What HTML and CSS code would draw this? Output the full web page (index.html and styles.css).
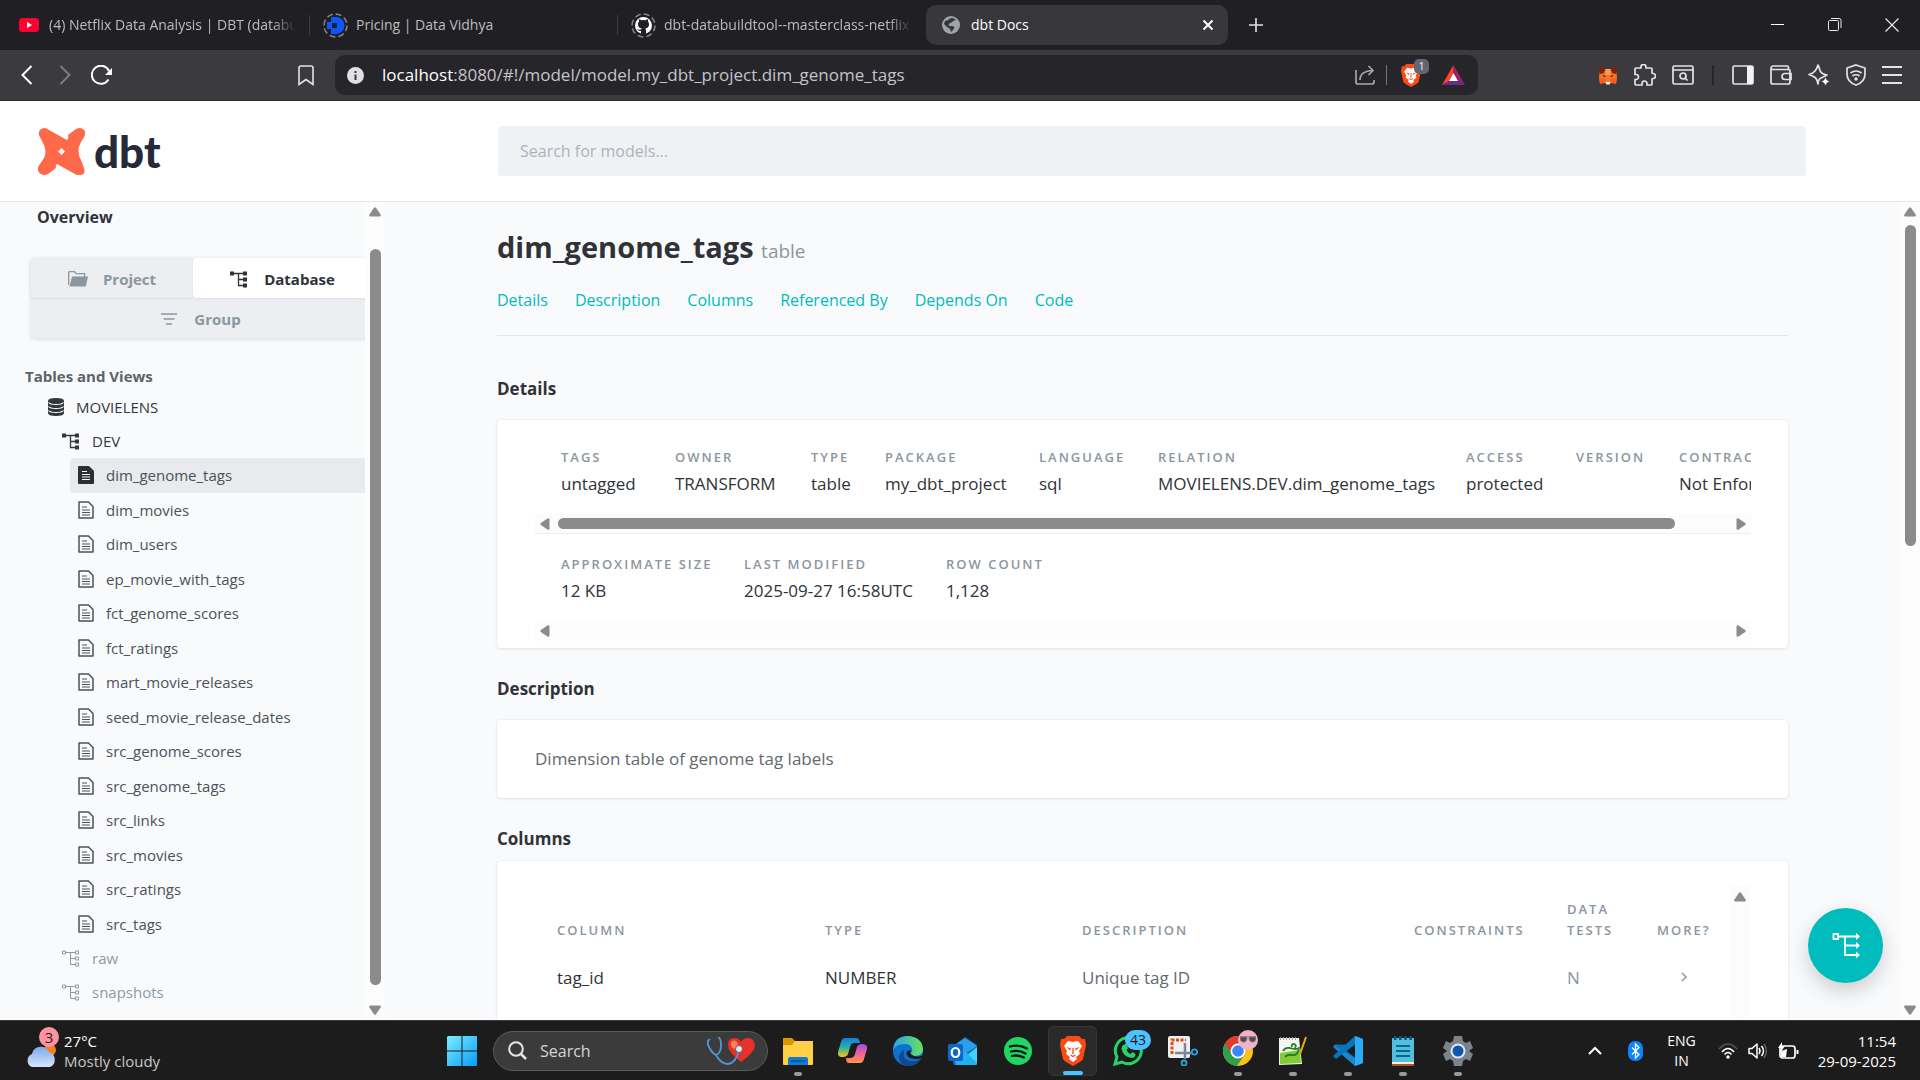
FILE: index.html
```html
<!DOCTYPE html>
<html lang="en">
<head>
<meta charset="utf-8">
<title>dbt Docs</title>
<link rel="stylesheet" href="styles.css">
</head>
<body>
<svg class="defs" aria-hidden="true">
  <symbol id="doc" viewBox="0 0 16 18"><path d="M1 1h9.500l4.500 4.500V17H1z" fill="none" stroke="currentColor" stroke-width="1.500" stroke-linejoin="round"/><path d="M4 6h5M4 9h8M4 11.500h8M4 14h8" stroke="currentColor" stroke-width="1.200"/></symbol>
  <symbol id="doc-on" viewBox="0 0 16 18"><path d="M1 0h10l5 5v12q0 1-1 1H1q-1 0-1-1V1q0-1 1-1z" fill="currentColor"/><path d="M4 5.500h5M4 8.500h8M4 11h8M4 13.500h8" stroke="#fff" stroke-width="1.200"/></symbol>
  <symbol id="tree-on" viewBox="0 0 17 17"><path d="M2 2.500h13M8.500 2.500v12H15M8.500 8.500H15" fill="none" stroke="currentColor" stroke-width="1.300"/><path d="M0 .5h4v4H0zM13 .5h4v4h-4zM13 6.500h4v4h-4zM13 12.500h4v4h-4z" fill="currentColor"/></symbol>
  <symbol id="tree" viewBox="0 0 17 17"><path d="M3.500 2.500h10M8.500 2.500v12h5M8.500 8.500h5M.5 1h3v3h-3zM13.500 1h3v3h-3zM13.500 7h3v3h-3zM13.500 13h3v3h-3z" fill="none" stroke="currentColor"/></symbol>
  <symbol id="arrow" viewBox="0 0 12 10"><path d="M5 .8q1-1 2 0l4.600 6.700q.8 1.800-1 2H1.400q-1.800-.2-1-2z" fill="#8b8b8b"/></symbol>
  <symbol id="lion" viewBox="0 0 26 30"><path d="M7 0h12l3 3 3 0 1 6-3 14q-1 2-3 3l-7 4-7-4q-2-1-3-3L0 9l1-6h3z" fill="#fb4a12"/><path d="M8 5l5 1 5-1 4 5-3 5 1 3-4 3 1 2-4 3-4-3 1-2-4-3 1-3-3-5z" fill="#fff"/><path d="M6.500 11l4.500 1.500-1 2zM19.500 11l-4.500 1.500 1 2z" fill="#fb4a12"/><path d="M13 12v6M10.500 19l2.500 1.500 2.500-1.500" fill="none" stroke="#fb4a12" stroke-width="1.300"/></symbol>
</svg>

<header class="browser">
  <div class="tabs">
    <div class="tab">
      <svg width="20" height="14" viewBox="0 0 20 14"><rect width="20" height="14" rx="3.500" fill="#ff0033"/><path d="M8 4l5 3-5 3z" fill="#fff"/></svg>
      <span class="tab-title">(4) Netflix Data Analysis | DBT (databu</span>
    </div>
    <div class="tab">
      <svg width="25" height="25" viewBox="0 0 25 25"><circle cx="12.500" cy="12.500" r="11.500" fill="none" stroke="#85858b" stroke-width="1.500" stroke-dasharray="6 3"/><path d="M8 4h5a8.500 8.500 0 0 1 0 17H8v-5H4V9h4zM9 10v5h5v-5z" fill="#0b57ff" fill-rule="evenodd"/></svg>
      <span class="tab-title">Pricing | Data Vidhya</span>
    </div>
    <div class="tab">
      <svg width="25" height="25" viewBox="0 0 25 25"><circle cx="12.500" cy="12.500" r="11.500" fill="none" stroke="#85858b" stroke-width="1.500" stroke-dasharray="6 3"/><circle cx="12.500" cy="12.500" r="8.500" fill="#fff"/><path d="M10 21v-3q-3 .5-4-2 2 1 4 .5l.7-1q-4-.8-3.700-4.500 0-1.500 1-2.500-.4-1 0-2.300 1.300 0 2.500 1 2-.6 4 0 1.200-1 2.500-1 .4 1.300 0 2.300 1 1 1 2.500.3 3.700-3.700 4.500.7.700.7 2V21z" fill="#202024"/></svg>
      <span class="tab-title">dbt-databuildtool--masterclass-netflix</span>
    </div>
    <div class="tab active">
      <svg width="18" height="18" viewBox="0 0 18 18"><circle cx="9" cy="9" r="9" fill="#9da3ab"/><path d="M9 2q3-.3 5 2l-3 1q-1 2-3 2-2 1-1 3l4 0q2 1 1 3l-3 3-1-3-3-2-3-3 1-3 3-1z" fill="#38373c"/></svg>
      <span class="tab-title">dbt Docs</span>
      <button class="icon-btn" aria-label="Close tab"><svg width="12" height="12" viewBox="0 0 12 12"><path d="M1.500 1.500l9 9M10.500 1.500l-9 9" stroke="#fff" stroke-width="2"/></svg></button>
    </div>
    <button class="icon-btn new-tab" aria-label="New tab"><svg width="14" height="14" viewBox="0 0 14 14"><path d="M7 0v14M0 7h14" stroke="#e4e4e6" stroke-width="1.600"/></svg></button>
    <div class="win">
      <button class="icon-btn" aria-label="Minimize"><svg width="14" height="14" viewBox="0 0 14 14"><path d="M0 6.500h13" stroke="#fff"/></svg></button>
      <button class="icon-btn" aria-label="Restore"><svg width="14" height="14" viewBox="0 0 14 14"><path d="M.5 3.500q0-1 1-1h8q1 0 1 1v8q0 1-1 1h-8q-1 0-1-1zM3 .5h8q2 0 2 2V10" fill="none" stroke="#e8e8e8"/></svg></button>
      <button class="icon-btn" aria-label="Close"><svg width="14" height="14" viewBox="0 0 14 14"><path d="M.5 .5l13 13M13.500 .5l-13 13" stroke="#e8e8e8" stroke-width="1.200"/></svg></button>
    </div>
  </div>
  <div class="toolbar">
    <div class="nav-icons">
      <button class="icon-btn" aria-label="Back"><svg width="12" height="20" viewBox="0 0 12 20"><path d="M10.500 1L1.500 10l9 9" fill="none" stroke="#fff" stroke-width="2"/></svg></button>
      <button class="icon-btn" aria-label="Forward"><svg width="12" height="20" viewBox="0 0 12 20"><path d="M1.500 1l9 9-9 9" fill="none" stroke="#7d7c82" stroke-width="2"/></svg></button>
      <button class="icon-btn" aria-label="Reload"><svg width="22" height="20" viewBox="0 0 22 20"><path d="M17.500 14.500a9 9 0 1 1 .5-8.500" fill="none" stroke="#fff" stroke-width="2"/><path d="M21 3v7h-7z" fill="#fff"/></svg></button>
    </div>
    <button class="icon-btn bookmark" aria-label="Bookmark"><svg width="16" height="21" viewBox="0 0 16 21"><path d="M1 3q0-2 2-2h10q2 0 2 2v16.500l-7-5-7 5z" fill="none" stroke="#e4e4e6" stroke-width="1.600"/></svg></button>
    <div class="address">
      <svg width="17" height="17" viewBox="0 0 17 17"><circle cx="8.500" cy="8.500" r="8.500" fill="#e1e0e5"/><path d="M8.500 4v2M8.500 7.500V13" stroke="#38373c" stroke-width="2"/></svg>
      <div class="url"><span>localhost</span>:8080/#!/model/model.my_dbt_project.dim_genome_tags</div>
      <svg width="20" height="20" viewBox="0 0 20 20"><path d="M1 5v12q0 2 2 2h14q2 0 2-2v-2M5 15q0-9 13-9.500M13.500 1L18 5.500 13.500 10" fill="none" stroke="#a7a6ac" stroke-width="1.700"/></svg>
      <i class="bar"></i>
      <span class="shield"><svg width="20" height="23"><use href="#lion"/></svg><b>1</b></span>
      <svg width="23" height="20" viewBox="0 0 23 20"><path d="M11.500 0L0 20l7-4 4.500-8z" fill="#ff4724"/><path d="M11.500 0L23 20l-7-4-4.500-8z" fill="#9e1f63"/><path d="M0 20h23l-7-4H7z" fill="#662d91"/><path d="M11.500 8L16 16H7z" fill="#fff"/></svg>
    </div>
    <div class="extensions">
      <svg width="20" height="20" viewBox="0 0 20 20"><path d="M2 5l5 1h6l5-1 1 7-1 6-5-1-1 2H8l-1-2-5 1-1-6z" fill="#f5742a"/><path d="M1 0l6 4-1 4-4 1zM19 0l-6 4 1 4 4 1z" fill="#7a2410"/><path d="M7 4h6l-1 6H8z" fill="#ff9a55"/><path d="M1 13l6 1v4l-5 1zM19 13l-6 1v4l5 1z" fill="#ff5c16"/><path d="M7.500 17h5l-1 2.500h-3z" fill="#fff"/><path d="M4.500 10l3 1-1 1.500zM15.500 10l-3 1 1 1.500z" fill="#223"/></svg>
      <svg width="22" height="22" viewBox="0 0 22 22"><path d="M2 4h5V3a2.500 2.500 0 0 1 5 0v1h5q1 0 1 1v4l1 .5a2.500 2.500 0 0 1 0 5L18 15v5q0 1-1 1h-4v-1.500a2.500 2.500 0 0 0-5 0V21H2q-1 0-1-1v-4.500h1a2.500 2.500 0 0 0 0-5H1V5q0-1 1-1z" fill="none" stroke="#e4e4e6" stroke-width="1.700"/></svg>
      <svg width="22" height="20" viewBox="0 0 22 20"><rect x="1" y="1" width="20" height="18" rx="1.500" fill="none" stroke="#e4e4e6" stroke-width="1.700"/><path d="M1 5h20" stroke="#e4e4e6" stroke-width="1.500"/><circle cx="11" cy="11" r="3" fill="none" stroke="#e4e4e6" stroke-width="1.700"/><path d="M13 13l2.500 2.500" stroke="#e4e4e6" stroke-width="1.700"/></svg>
      <i class="bar dark"></i>
      <svg width="22" height="20" viewBox="0 0 22 20"><rect x="1" y="1" width="20" height="18" rx="1.500" fill="none" stroke="#e4e4e6" stroke-width="1.700"/><path d="M15 1h6v18h-6z" fill="#f2f2f4"/></svg>
      <svg width="22" height="20" viewBox="0 0 22 20"><path d="M1 4v13q0 2 2 2h15q2 0 2-2V6q0-1.500-2-1.500H3Q1 4.500 1 3t2-2h14q1.500 0 1.500 1.500v2M21 8.500h-6q-3 0-3 3t3 3h6z" fill="none" stroke="#e4e4e6" stroke-width="1.700"/></svg>
      <svg width="22" height="22" viewBox="0 0 22 22"><path d="M10 1q1 2 2 5.500T19 11q-1 1-5 2.500T10 20q-1-5-3-6.500T1 10.500Q5 9.500 7 7t3-6z" fill="none" stroke="#e4e4e6" stroke-width="1.700" stroke-linejoin="round"/><path d="M17.500 13.500q1 3.500 4 4-3 .5-4 4-1-3.500-4-4 3-.5 4-4z" fill="#fff"/></svg>
      <svg width="20" height="22" viewBox="0 0 20 22"><path d="M10 1l9 3v6q0 8-9 11-9-3-9-11V4z" fill="none" stroke="#e4e4e6" stroke-width="1.700"/><path d="M4.500 9q5.500-4 11 0M6.500 12q3.500-2.500 7 0" fill="none" stroke="#e4e4e6" stroke-width="1.700"/><circle cx="10" cy="15" r="1.700" fill="#e4e4e6"/></svg>
      <svg width="20" height="18" viewBox="0 0 20 18"><path d="M0 1h20M0 9h20M0 17h20" stroke="#e4e4e6" stroke-width="1.800"/></svg>
    </div>
  </div>
</header>

<div class="app">
  <div class="app-header">
    <a class="logo" href="#" aria-label="dbt">
      <svg width="47" height="47" viewBox="0 0 47 47"><path d="M1 7Q0 1 6 0q3 0 5 2l18 10q2-2 1-5l8-6q4-2 7 0 3 2 2 6-1 3-4 7-5 9 0 18l3 8q2 6-3 7-3 1-6-1L19 36q-2 1-1 4l-8 6q-4 2-7 0-4-2-3-7l6-9q3-6 0-13z" fill="#ff694a"/><path d="M23.500 20l3.500 3.500-3.500 3.500-3.500-3.500z" fill="#fff"/></svg>
      <span>dbt</span>
    </a>
    <input class="search" type="search" placeholder="Search for models..." aria-label="Search for models">
  </div>

  <div class="app-body">
    <nav class="sidebar">
      <div class="side-content">
        <a class="overview" href="#">Overview</a>
        <div class="switch">
          <button><svg width="20" height="16" viewBox="0 0 20 16"><path d="M.7 14V1.500q0-.8.8-.8h5l1.500 2h8.500V6" fill="none" stroke="currentColor" stroke-width="1.300"/><path d="M4 5.500h16l-2 9q-.3 1-1 1H1.500z" fill="currentColor"/></svg>Project</button>
          <button class="on"><svg width="17" height="17"><use href="#tree-on"/></svg>Database</button>
          <button class="wide"><svg width="16" height="12" viewBox="0 0 16 12"><path d="M0 1h16M2.500 6h11M5 11h6" stroke="currentColor" stroke-width="1.300"/></svg>Group</button>
        </div>
        <h2 class="side-title">Tables and Views</h2>
        <a class="node db" href="#"><svg width="16" height="18" viewBox="0 0 16 18"><path d="M0 3q0-3 8-3t8 3v12q0 3-8 3t-8-3z" fill="currentColor"/><path d="M.5 4.500Q2 6.500 8 6.500t7.500-2M.5 8.500q1.500 2 7.500 2t7.500-2M.5 12.500q1.500 2 7.500 2t7.500-2" fill="none" stroke="#fff" stroke-width="1.100"/></svg>MOVIELENS</a>
        <a class="node schema" href="#"><svg width="17" height="17"><use href="#tree-on"/></svg>DEV</a>
        <div class="models">
          <a class="node on" href="#"><svg width="16" height="18"><use href="#doc-on"/></svg>dim_genome_tags</a>
          <a class="node" href="#"><svg width="16" height="18"><use href="#doc"/></svg>dim_movies</a>
          <a class="node" href="#"><svg width="16" height="18"><use href="#doc"/></svg>dim_users</a>
          <a class="node" href="#"><svg width="16" height="18"><use href="#doc"/></svg>ep_movie_with_tags</a>
          <a class="node" href="#"><svg width="16" height="18"><use href="#doc"/></svg>fct_genome_scores</a>
          <a class="node" href="#"><svg width="16" height="18"><use href="#doc"/></svg>fct_ratings</a>
          <a class="node" href="#"><svg width="16" height="18"><use href="#doc"/></svg>mart_movie_releases</a>
          <a class="node" href="#"><svg width="16" height="18"><use href="#doc"/></svg>seed_movie_release_dates</a>
          <a class="node" href="#"><svg width="16" height="18"><use href="#doc"/></svg>src_genome_scores</a>
          <a class="node" href="#"><svg width="16" height="18"><use href="#doc"/></svg>src_genome_tags</a>
          <a class="node" href="#"><svg width="16" height="18"><use href="#doc"/></svg>src_links</a>
          <a class="node" href="#"><svg width="16" height="18"><use href="#doc"/></svg>src_movies</a>
          <a class="node" href="#"><svg width="16" height="18"><use href="#doc"/></svg>src_ratings</a>
          <a class="node" href="#"><svg width="16" height="18"><use href="#doc"/></svg>src_tags</a>
        </div>
        <a class="node schema muted" href="#"><svg width="17" height="17"><use href="#tree"/></svg>raw</a>
        <a class="node schema muted" href="#"><svg width="17" height="17"><use href="#tree"/></svg>snapshots</a>
      </div>
      <div class="scroll side-scroll"><svg class="up"><use href="#arrow"/></svg><i></i><svg class="down"><use href="#arrow"/></svg></div>
    </nav>

    <main class="main">
      <div class="content">
        <h1>dim_genome_tags <small>table</small></h1>
        <nav class="links"><a href="#">Details</a><a href="#">Description</a><a href="#">Columns</a><a href="#">Referenced By</a><a href="#">Depends On</a><a href="#">Code</a></nav>

        <section>
          <h2>Details</h2>
          <div class="card details">
            <dl class="facts primary">
              <div><dt>Tags</dt><dd>untagged</dd></div>
              <div><dt>Owner</dt><dd>TRANSFORM</dd></div>
              <div><dt>Type</dt><dd>table</dd></div>
              <div><dt>Package</dt><dd>my_dbt_project</dd></div>
              <div><dt>Language</dt><dd>sql</dd></div>
              <div><dt>Relation</dt><dd>MOVIELENS.DEV.dim_genome_tags</dd></div>
              <div><dt>Access</dt><dd>protected</dd></div>
              <div><dt>Version</dt><dd></dd></div>
              <div><dt>Contract</dt><dd>Not Enforced</dd></div>
            </dl>
            <div class="hscroll ruled"><svg class="left"><use href="#arrow"/></svg><i></i><svg class="right"><use href="#arrow"/></svg></div>
            <dl class="facts stats">
              <div><dt>Approximate Size</dt><dd>12 KB</dd></div>
              <div><dt>Last Modified</dt><dd>2025-09-27 16:58UTC</dd></div>
              <div><dt>Row Count</dt><dd>1,128</dd></div>
            </dl>
            <div class="hscroll"><svg class="left"><use href="#arrow"/></svg><svg class="right"><use href="#arrow"/></svg></div>
          </div>
        </section>

        <section>
          <h2>Description</h2>
          <div class="card text">Dimension table of genome tag labels</div>
        </section>

        <section class="columns">
          <h2>Columns</h2>
          <div class="card table-card">
            <table>
              <thead><tr><th class="c1">Column</th><th class="c2">Type</th><th class="c3">Description</th><th class="c4">Constraints</th><th class="c5">Data Tests</th><th class="c6">More?</th></tr></thead>
              <tbody><tr><td>tag_id</td><td>NUMBER</td><td class="soft">Unique tag ID</td><td></td><td class="faint">N</td><td><svg class="more" width="6" height="10" viewBox="0 0 6 10"><path d="M1 1l4 4-4 4" fill="none" stroke="#8a969f" stroke-width="1.500"/></svg></td></tr></tbody>
            </table>
            <div class="scroll inner-scroll"><svg class="up"><use href="#arrow"/></svg></div>
          </div>
        </section>
      </div>
      <div class="scroll main-scroll"><svg class="up"><use href="#arrow"/></svg><i></i><svg class="down"><use href="#arrow"/></svg></div>
      <button class="fab" aria-label="View lineage graph"><svg width="28" height="28" viewBox="0 0 28 28"><path d="M1.500 2h4.500v5H1.500zM6 4.500h18M13 4.500v18.500h11M13 13.500h11" fill="none" stroke="#fff" stroke-width="1.800"/><path d="M24 1l4 3.500-4 3.500zM24 10l4 3.500-4 3.500zM24 19.500l4 3.500-4 3.500z" fill="#fff"/></svg></button>
    </main>
  </div>
</div>

<footer class="taskbar">
  <div class="weather">
    <span class="cloud"><svg width="32" height="26" viewBox="0 0 32 26"><defs><linearGradient id="cl" x2="0" y2="1"><stop stop-color="#7fa8ea"/><stop offset="1" stop-color="#d6e6fb"/></linearGradient></defs><circle cx="25" cy="9" r="6" fill="#f77f1f"/><path d="M7 26a7 7 0 0 1 0-13 9 9 0 0 1 17-2 8 8 0 0 1 1 15z" fill="url(#cl)"/></svg><b>3</b></span>
    <div><p>27°C</p><p class="dim">Mostly cloudy</p></div>
  </div>
  <button class="start" aria-label="Start"><svg width="30" height="30" viewBox="0 0 30 30"><defs><linearGradient id="wn" x2="1" y2="1"><stop stop-color="#7ceeff"/><stop offset="1" stop-color="#079bf9"/></linearGradient></defs><path d="M1 0h13.500v14.500H0V1zM15.500 0H30v14.500H15.500zM0 15.500h14.500V30H0zM15.500 15.500H30V30H15.500z" fill="url(#wn)"/></svg></button>
  <label class="task-search">
    <svg width="19" height="19" viewBox="0 0 19 19"><circle cx="8" cy="8" r="6.800" fill="none" stroke="#e6e6e6" stroke-width="2"/><path d="M13 13l5 5" stroke="#e6e6e6" stroke-width="2.500"/></svg>
    <input type="text" placeholder="Search" aria-label="Search">
    <svg width="48" height="28" viewBox="0 0 48 28"><path d="M34 25Q21 15 21 8q0-7 6-7 5 0 7 4 2-4 7-4 6 0 7 7 0 7-14 17z" fill="#e92f2a"/><path d="M24 5q4-4 7 2l-3 5q-5-1-4-7z" fill="#ff8055"/><path d="M3 2Q-1 4 2 10t7 8q5-2 5-9 0-8-3-9M9 18q5 9 12 9 8-1 11-14" fill="none" stroke="#5297d9" stroke-width="1.800"/><circle cx="32" cy="12" r="3.500" fill="#e4e7ec" stroke="#5c6772"/></svg>
  </label>
  <div class="apps">
    <button class="run" aria-label="File Explorer"><svg width="30" height="28" viewBox="0 0 30 28"><path d="M0 1h9l3 3h12v8H0z" fill="#dc9600"/><path d="M0 8h9l3-4h18v23q0 1-1 1H1q-1 0-1-1z" fill="#ffd045"/><path d="M5 28v-6q0-2 2-2h16q2 0 2 2v6z" fill="#117bd1"/><path d="M8 24h14" stroke="#074e96" stroke-width="1.500"/></svg></button>
    <button aria-label="Copilot"><svg width="29" height="27" viewBox="0 0 29 27"><defs><linearGradient id="c1" x2="0" y2="1"><stop stop-color="#1679e6"/><stop offset=".5" stop-color="#26b59d"/><stop offset="1" stop-color="#ffc21a"/></linearGradient><linearGradient id="c2" x2="0" y2="1"><stop stop-color="#a04be8"/><stop offset=".6" stop-color="#fb6688"/><stop offset="1" stop-color="#ff9a3d"/></linearGradient></defs><path d="M7 1h12q2 0 3 5h-6q-3 0-4 4l-2 7q-1 3-5 3-6 0-5-5l3-10q1-4 4-4z" fill="url(#c1)"/><path d="M22 26H11q-3 0-3-5h4q4 0 5-4l2-7q1-3 5-3 6 0 5 5l-3 10q-1 4-4 4z" fill="url(#c2)"/></svg></button>
    <button aria-label="Edge"><svg width="30" height="30" viewBox="0 0 30 30"><defs><linearGradient id="ed" x2="1"><stop stop-color="#24a5ec"/><stop offset="1" stop-color="#6ae25b"/></linearGradient></defs><circle cx="15" cy="15" r="15" fill="#0d72cf"/><path d="M0 14Q1 0 15 0q14 1 15 13 0 7-8 7-4 0-4-3 2-2 1-5-2-4-7-4Q3 8 0 14z" fill="url(#ed)"/><path d="M11 16q-2 8 7 9 5 1 9-2l1 0q-4 7-13 7-9-1-9-9 0-4 5-7z" fill="#114a8b"/><path d="M18 14q-2 3 1 5 5 3 11 0l-1 3q-6 2-12 0-5-3-3-7z" fill="#1c1c1c"/></svg></button>
    <button aria-label="Outlook"><svg width="30" height="28" viewBox="0 0 30 28"><path d="M5 9L17 0l12 8v18q0 2-2 2H7q-2 0-2-2z" fill="#1066b8"/><path d="M7 8L17 1l12 8-12 8z" fill="#2d9fe9"/><path d="M29 10v16q0 2-2 2H7z" fill="#3ed4fb"/><path d="M6 20l11-6 12 12q0 2-3 2H8z" fill="#23b0f0"/><rect y="7" width="15" height="17" rx="2" fill="#0f67c5"/><ellipse cx="7.500" cy="15.500" rx="3.800" ry="4.500" fill="none" stroke="#fff" stroke-width="2.200"/></svg></button>
    <button aria-label="Spotify"><svg width="28" height="28" viewBox="0 0 28 28"><circle cx="14" cy="14" r="14" fill="#1ed760"/><path d="M6 9.500q9-2.500 17 2M7 14.500q8-2 14.500 2M8 19q6-1.500 12 1.500" fill="none" stroke="#10131a" stroke-width="2.300" stroke-linecap="round"/></svg></button>
    <button class="current" aria-label="Brave"><svg width="26" height="30"><use href="#lion"/></svg></button>
    <button aria-label="WhatsApp"><svg width="30" height="30" viewBox="0 0 30 30"><path d="M2 28l2-7a13 13 0 1 1 5 5z" fill="none" stroke="#25d366" stroke-width="3"/><path d="M10 9l3-1 2 4-1.500 2q1.500 3 4 4l2-2 3 2q0 4-4 4-8-1-10-9 0-2 1.500-4z" fill="#25d366"/></svg><b class="count">43</b></button>
    <button aria-label="Snipping Tool"><svg width="30" height="30" viewBox="0 0 30 30"><rect width="22" height="22" rx="2" fill="#eef0f3"/><path d="M4 18V4h14" fill="none" stroke="#e04c17" stroke-width="3" stroke-dasharray="3 1.500"/><path d="M17 7v16M7 17h17" stroke="#7d8790" stroke-width="2.500"/><circle cx="26.500" cy="16" r="2.700" fill="none" stroke="#2a9fe2" stroke-width="1.800"/><circle cx="16" cy="27" r="2.500" fill="none" stroke="#2a9fe2" stroke-width="1.800"/></svg></button>
    <button class="run" aria-label="Chrome"><svg width="30" height="30" viewBox="0 0 30 30"><circle cx="15" cy="15" r="15" fill="#fbc116"/><path d="M15 15L2 7.500A15 15 0 0 0 14 30l8-12z" fill="#2da14e"/><path d="M2 7.500A15 15 0 0 1 28 7.500H15l-6 11z" fill="#e33b2e"/><circle cx="15" cy="15" r="7.500" fill="#fff"/><circle cx="15" cy="15" r="5.800" fill="#4285f4"/></svg><span class="avatar"><svg width="16" height="7" viewBox="0 0 16 7"><path d="M0 0h16M0 1h7q0 5-3.500 5T0 1zM9 1h7q0 5-3.500 5T9 1z" fill="#4d4852" stroke="#777"/></svg></span></button>
    <button class="run" aria-label="Notepad++"><svg width="30" height="30" viewBox="0 0 30 30"><path d="M1 2h20l3 26-23 1z" fill="#f3f6ee"/><path d="M2 17l20-3 1 13-21 1z" fill="#82ca36"/><path d="M5 15q2-4 7-3 6 2 9 0-1 8-7 7-5-1-7 2M14 11q-1-3 2-3 3 1 1 4" fill="none" stroke="#217f25" stroke-width="1.800"/><path d="M2 2.500h18" stroke="#a0a0a0" stroke-width="3" stroke-dasharray="1 2"/><path d="M28 1l-6 17" stroke="#e6aa12" stroke-width="2"/></svg></button>
    <button class="run" aria-label="Visual Studio Code"><svg width="30" height="30" viewBox="0 0 30 30"><path d="M22 0l8 3v24l-8 3L0 11l3-3 19 14z" fill="#1689d3"/><path d="M22 0l8 3v24l-8 3z" fill="#2badf6"/><path d="M22 8v14L0 9zM3 23l-3-3L22 0v8z" fill="#0874bd"/><path d="M22 8.500v13L13.500 15z" fill="#1c1c1c"/></svg></button>
    <button class="run" aria-label="Notepad"><svg width="22" height="30" viewBox="0 0 22 30"><rect y="2" width="22" height="28" rx="1" fill="#54bfdd"/><path d="M2 2h18" stroke="#07597c" stroke-width="4" stroke-dasharray="2.500 2.600"/><path d="M4 10h14M4 15h14M4 20h14" stroke="#06678f" stroke-width="2"/><path d="M0 26h22v2H0z" fill="#f7efe8"/><path d="M0 28h22v2H0z" fill="#ae5415"/></svg></button>
    <button class="run" aria-label="Settings"><svg width="30" height="30" viewBox="0 0 30 30"><path d="M11 0h8l1 5 3 2 4-2 3 7-4 3 4 3-3 7-4-2-3 2-1 5h-8l-1-5-3-2-4 2-3-7 4-3-4-3 3-7 4 2 3-2z" fill="#7b848d"/><circle cx="15" cy="15" r="7.500" fill="#e5e9ee"/><circle cx="15" cy="15" r="5.500" fill="#0b58ad"/></svg></button>
  </div>
  <div class="tray">
    <svg class="chev" width="14" height="9" viewBox="0 0 14 9"><path d="M1 8l6-6 6 6" fill="none" stroke="#fff" stroke-width="2"/></svg>
    <svg width="15" height="20" viewBox="0 0 15 20"><rect width="15" height="20" rx="7" fill="#0a84ff"/><path d="M4 6.500l7 7L7.500 17V3L11 6.500l-7 7" fill="none" stroke="#fff" stroke-width="1.300"/></svg>
    <div class="lang"><p>ENG</p><p>IN</p></div>
    <svg width="20" height="16" viewBox="0 0 20 16"><path d="M1 6q9-10 18 0" fill="none" stroke="#555" stroke-width="1.500"/><path d="M4 9q6-7 12 0M6.500 11.500q3.500-4 7 0" fill="none" stroke="#fff" stroke-width="1.600"/><circle cx="10" cy="14" r="1.700" fill="#fff"/></svg>
    <svg width="20" height="16" viewBox="0 0 20 16"><path d="M1 5.500h3L9 1v14l-5-4.500H1z" fill="none" stroke="#fff" stroke-width="1.500" stroke-linejoin="round"/><path d="M11 5q2 3 0 6M13.500 3q4 5 0 10" fill="none" stroke="#fff" stroke-width="1.500"/><path d="M16 1q5 7 0 14" fill="none" stroke="#666" stroke-width="1.300"/></svg>
    <svg width="21" height="17" viewBox="0 0 21 17"><rect x="2" y="4" width="15" height="12" rx="2.500" fill="none" stroke="#fff" stroke-width="1.700"/><path d="M18.500 8v4h2V8zM3 15V9l6-2-1 8zM4 0L0 6h3l-1 5 5-7H4z" fill="#fff"/></svg>
    <div class="clock"><p>11:54</p><p>29-09-2025</p></div>
  </div>
</footer>
</body>
</html>
```
FILE: styles.css
```css
* { box-sizing: border-box; }
body {
  margin: 0;
  height: 100vh;
  display: grid;
  grid-template-rows: auto 1fr auto;
  overflow: hidden;
  font-family: "Open Sans", "Noto Sans", sans-serif;
  font-size: 17px;
  color: #2f3338;
}
h1, h2, p, dl, dd { margin: 0; }
a { color: inherit; text-decoration: none; }
button { font: inherit; border: 0; padding: 0; background: none; color: inherit; }
svg { display: block; flex: none; }
.defs { position: absolute; width: 0; height: 0; }
.icon-btn { display: flex; align-items: center; justify-content: center; flex: none; }

/* Browser window */
.tabs { display: flex; align-items: center; height: 50px; padding-left: 2px; background: #202024; }
.tab { display: flex; align-items: center; gap: 8px; width: 308px; height: 40px; padding: 0 14px 0 13px; color: #bdbdc1; font-size: 14px; line-height: 20px; }
.tab:first-child { gap: 10px; padding-left: 17px; }
.tab:nth-child(-n+2) { background: linear-gradient(#3c3c41, #3c3c41) right center / 1px 20px no-repeat; }
.tab-title { flex: 1; overflow: hidden; white-space: nowrap; mask-image: linear-gradient(to right, #000 calc(100% - 24px), transparent); }
.tab:nth-child(2) .tab-title, .tab.active .tab-title { mask-image: none; }
.tab.active { width: 302px; gap: 11px; padding: 0 14px 0 16px; border-radius: 10px; background: #38373c; color: #fff; }
.new-tab { width: 56px; height: 40px; }
.win { display: flex; margin-left: auto; }
.win .icon-btn { width: 57px; height: 50px; }
.toolbar { display: flex; align-items: center; height: 51px; background: #3b3a3f; border-bottom: 1px solid #2c2b30; }
.nav-icons { display: grid; grid-template-columns: 38px 32px 22px; width: 298px; padding-left: 21px; }
.nav-icons .icon-btn { justify-content: flex-start; }
.bookmark { margin-right: 21px; }
.address { flex: 1; display: flex; align-items: center; height: 40px; padding: 0 13px 0 12px; border-radius: 10px; background: #26252a; }
.url { flex: 1; margin-left: 18px; color: #c5c4c9; line-height: 24px; white-space: nowrap; }
.url span { color: #fff; }
.bar { width: 1px; height: 20px; margin: 0 14px 0 11px; background: #77767c; }
.bar.dark { width: 2px; margin: 0 2px; background: #26252a; }
.shield { position: relative; margin-right: 21px; }
.shield b { position: absolute; left: 13px; top: -5px; width: 15px; height: 15px; border-radius: 5px; background: #636672; color: #fff; font-size: 10px; font-weight: 400; line-height: 15px; text-align: center; }
.extensions { display: flex; align-items: center; gap: 16px; padding: 0 18px 0 120px; }

/* Docs header */
.app { display: grid; grid-template-rows: 101px 1fr; min-height: 0; background: #f9fafc; }
.app-header { display: flex; align-items: center; padding: 0 114px 0 38px; background: #fff; border-bottom: 1px solid #e6e9ec; }
.logo { display: flex; align-items: center; gap: 9px; width: 460px; height: 50px; color: #262a38; font: 900 44px/50px Lato, sans-serif; }
.search { flex: 1; height: 50px; padding: 0 22px; border: 0; border-radius: 4px; background: #f0f1f3; font: inherit; font-size: 16px; color: #2f3338; }
.search::placeholder { color: #a9b4be; }
.app-body { display: grid; grid-template-columns: 385px 1fr; min-height: 0; overflow: hidden; }

/* Scroll bars */
.scroll { display: flex; flex-direction: column; align-items: center; width: 20px; padding: 5px 0; background: #fcfcfc; }
.scroll svg { width: 12px; height: 10px; }
.scroll i { width: 11px; border-radius: 6px; background: #8b8b8b; }
.down { margin-top: auto; transform: rotate(180deg); }
.side-scroll i { flex: 1; margin: 32px 0 20px; }
.side-scroll .down { margin-top: 0; }
.hscroll { display: flex; align-items: center; height: 20px; padding: 0 4px; background: #fcfcfc; }
.hscroll svg { width: 12px; height: 10px; }
.hscroll i { width: 1117px; height: 11px; margin-left: 7px; border-radius: 6px; background: #8b8b8b; }
.hscroll.ruled { border-bottom: 1px solid #eceef0; }
.left { transform: rotate(-90deg); }
.right { margin-left: auto; transform: rotate(90deg); }

/* Sidebar */
.sidebar { display: grid; grid-template-columns: 1fr 20px; min-height: 0; overflow: hidden; }
.side-content { overflow: hidden; min-width: 0; font-size: 15px; line-height: 24px; }
.overview { display: block; padding: 3px 37px 0; font-size: 16px; font-weight: 700; }
.switch { display: grid; grid-template-columns: 162px 186px; grid-auto-rows: 40px; margin: 29px 0 26px 31px; width: 348px; border-radius: 4px; background: #eceef1; box-shadow: 0 1px 4px #d5d9de; font-weight: 700; color: #8b969f; }
.switch button { display: flex; align-items: center; justify-content: center; gap: 15px; padding-top: 2px; border-radius: 4px; box-shadow: 0 1px 2px #d9dde1; }
.switch .on { gap: 17px; padding-right: 7px; background: #fff; color: #2f3338; }
.switch .wide { grid-column: span 2; gap: 17px; padding-right: 8px; box-shadow: none; }
.side-title { margin: 0; padding-left: 25px; font-size: 15px; line-height: 24px; color: #5c6369; }
.node { display: flex; align-items: center; gap: 13px; height: 34px; color: #33383e; }
.db { gap: 12px; padding-left: 48px; margin-top: 2px; }
.schema { padding-left: 62px; }
.models { display: grid; grid-auto-rows: 1fr; min-height: 483px; margin-left: 70px; }
.models .node { height: auto; padding-left: 8px; gap: 12px; border-radius: 4px 0 0 4px; color: #4b5258; }
.models .on { background: #e8eaed; }
.models .on svg { color: #2b2f34; }
.node.muted { color: #8f9aa3; }

/* Model page */
.main { position: relative; display: flex; min-width: 0; min-height: 0; overflow: hidden; }
.content { flex: 1; min-width: 0; padding: 20px 112px 0; }
.main-scroll i { height: 321px; margin-top: 8px; }
h1 { font-size: 29px; line-height: 50px; }
small { font-size: 19px; font-weight: 400; color: #8b969f; }
.links { display: flex; gap: 27px; padding: 11px 0 22px; font-size: 16px; line-height: 26px; border-bottom: 1px solid #e3e6e9; color: #00bcbc; }
section h2 { margin-bottom: 18px; font-size: 17px; line-height: 26px; }
section { padding-top: 28px; }
.links + section { padding-top: 40px; }
.columns h2 { margin-bottom: 9px; }
.card { border-radius: 4px; background: #fff; box-shadow: 0 0 2px #dfe3e6, 0 1px 3px #e3e6e9; }
.details { padding: 24px 37px 7px 38px; }
.facts { display: grid; overflow: hidden; padding-left: 26px; white-space: nowrap; }
.primary { grid-template-columns: 114px 136px 74px 154px 119px 308px 110px 103px 0; height: 70px; }
.stats { grid-template-columns: 183px 202px 1fr; height: 87px; padding-top: 17px; }
dt, th { font-size: 13px; font-weight: 600; line-height: 26px; letter-spacing: 2px; text-transform: uppercase; color: #8b969f; }
dd { line-height: 28px; font-size: 17px; }
.text { padding: 26px 38px; line-height: 26px; color: #63696f; }
.table-card { display: flex; align-items: stretch; height: 300px; padding: 25px 38px 0 60px; }
table { flex: 1; align-self: flex-start; table-layout: fixed; border-collapse: collapse; }
th, td { padding: 0; text-align: left; vertical-align: bottom; }
th { line-height: 21px; padding: 13px 0 11px; }
td { height: 50px; vertical-align: middle; }
.c1 { width: 268px; }
.c2 { width: 257px; }
.c3 { width: 332px; }
.c4 { width: 153px; }
.c5 { width: 90px; padding-right: 30px; }
.soft { color: #63696f; }
.faint { color: #8b969f; }
.more { margin-left: 24px; }
.inner-scroll { padding-top: 6px; }
.fab { position: absolute; right: 37px; bottom: 37px; display: flex; align-items: center; justify-content: center; width: 75px; height: 75px; border-radius: 50%; background: #00bcbc; box-shadow: 0 8px 20px #0000002e; }

/* Desktop taskbar */
.taskbar { display: flex; align-items: center; height: 60px; border-top: 1px solid #3a3a3a; background: #1c1c1c; color: #fff; font-size: 15px; line-height: 20px; white-space: nowrap; }
.weather { display: flex; align-items: center; gap: 7px; width: 434px; padding-left: 25px; }
.dim { color: #c8c8c8; }
.cloud { position: relative; padding-top: 6px; }
.cloud b { position: absolute; left: 14px; top: -8px; width: 20px; height: 20px; border-radius: 50%; background: #ff949f; color: #1c1c1c; font-weight: 400; text-align: center; }
.start { display: flex; justify-content: center; width: 55px; }
.task-search { display: flex; align-items: center; gap: 13px; width: 275px; height: 40px; margin: 0 2px 0 4px; padding: 0 12px 0 14px; border: 1px solid #5a5a5a; border-radius: 20px; background: #3b3b3b; }
.task-search input { flex: 1; min-width: 0; padding: 0; border: 0; background: none; color: #ddd; font: inherit; font-size: 16px; }
.task-search input::placeholder { color: #d5d5d5; }
.apps { display: flex; }
.apps button { position: relative; display: flex; align-items: center; justify-content: center; width: 55px; height: 50px; }
.apps .current { width: 49px; margin: 0 3px; border: 1px solid #363636; border-radius: 5px; background: #2a2a2a; }
.run::after, .current::after { content: ""; position: absolute; bottom: 0; width: 8px; height: 4px; border-radius: 2px; background: #999; }
.current::after { width: 20px; background: #4cc2ff; }
.count { position: absolute; left: 25px; top: 4px; width: 26px; height: 20px; border-radius: 10px; background: #4cc2ff; color: #1c1c1c; font-size: 14px; font-weight: 400; }
.avatar { position: absolute; left: 28px; top: 4px; display: flex; align-items: center; justify-content: center; width: 20px; height: 20px; border-radius: 50%; background: #f3b1c7; }
.tray { display: flex; align-items: center; gap: 10px; margin-left: auto; padding-right: 24px; }
.chev { margin-right: 16px; }
.lang { margin: 0 12px 0 14px; font-size: 14px; text-align: center; }
.clock { margin-left: 9px; text-align: right; }
```
